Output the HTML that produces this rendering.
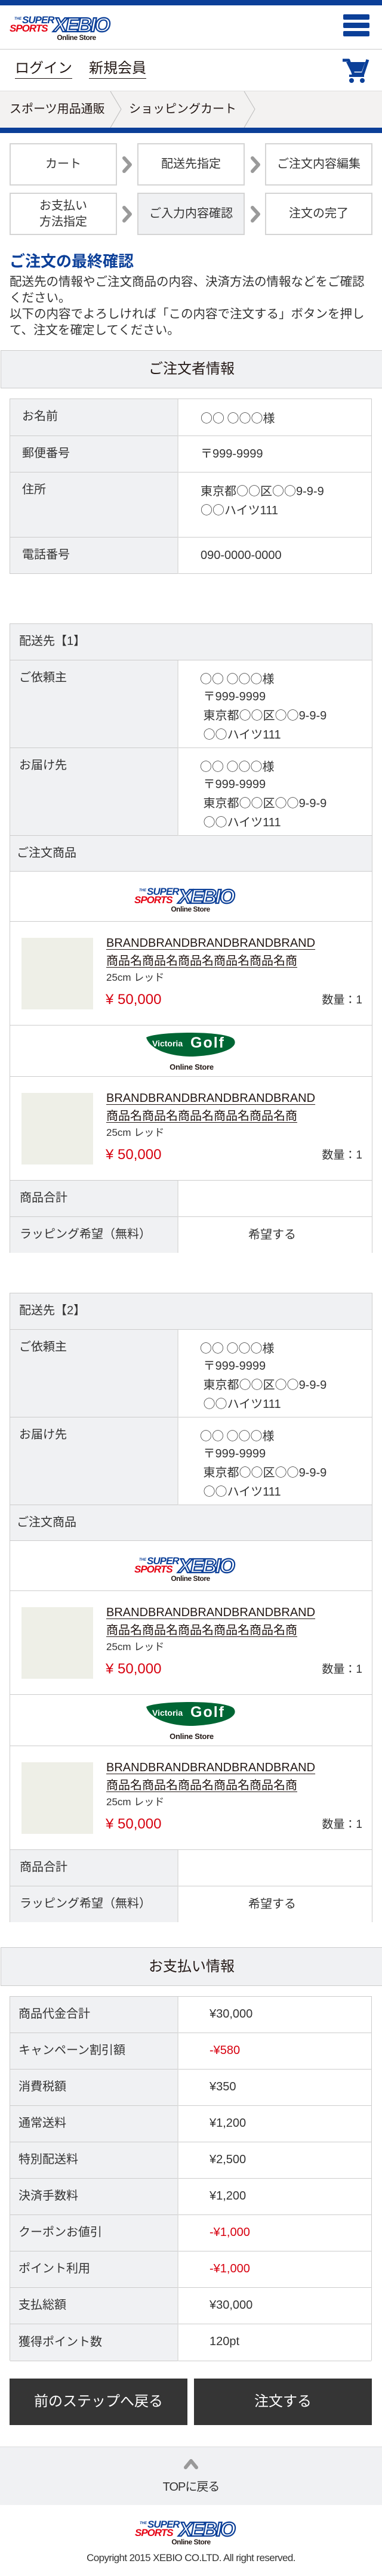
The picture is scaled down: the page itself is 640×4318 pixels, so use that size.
<!DOCTYPE html>
<html><head><meta charset="utf-8">
<style>
*{margin:0;padding:0;box-sizing:border-box}
body{width:640px;height:4318px;position:relative;background:#fff;font-family:"Liberation Sans","Noto Sans CJK JP",sans-serif;color:#333;overflow:hidden}
.a{position:absolute}
.g{background:#f0f1f3}
.c{font-family:"Noto Sans CJK JP",sans-serif}
.lbl{position:absolute;left:0;width:282px;background:#f0f1f3;border-right:2px solid #e2e2e2;border-bottom:1px solid #ccc}
.val{position:absolute;left:282px;right:0;background:#fff;border-bottom:1px solid #ccc}
.row{position:absolute;left:0;right:0}
.lt{position:absolute;left:20px;font-size:20px;line-height:29px}
.vt{position:absolute;left:37px;font-size:20px;line-height:29px;color:#333}
.step{position:absolute;width:180px;height:71px;border:2px solid #d4d4d4;display:flex;align-items:center;justify-content:center;text-align:center;font-size:20px;line-height:27px;color:#333}
.arr{position:absolute;width:22px;height:30px}
.u{text-decoration:underline;text-underline-offset:4px;text-decoration-thickness:1px;color:#231815}
.red{color:#d7000f}
</style></head><body>

<div class="a" style="left:0;top:0;width:640px;height:9px;background:#0b3f98"></div>
<svg class="a" style="left:16px;top:22px" width="190" height="46" viewBox="0 0 190 46">
 <text x="8" y="11" font-family="Liberation Sans" font-weight="bold" font-style="italic" font-size="6" fill="#0b3f98">THE</text>
 <text x="21" y="17" font-family="Liberation Sans" font-weight="bold" font-style="italic" font-size="17" fill="#0b3f98" letter-spacing="-1">SUPER</text>
 <text x="0" y="31" font-family="Liberation Sans" font-weight="bold" font-style="italic" font-size="17" fill="#e50012" letter-spacing="-1">SPORTS</text>
 <text x="74" y="31" font-family="Liberation Sans" font-weight="bold" font-style="italic" font-size="33" fill="#fff" stroke="#0b3f98" stroke-width="2.2" letter-spacing="-2">XEBIO</text>
 <text x="112" y="45" text-anchor="middle" font-family="Liberation Sans" font-weight="bold" font-size="12" fill="#231815" letter-spacing="-0.5">Online Store</text>
</svg>
<div class="a" style="left:575px;top:24px;width:44px;height:9px;background:#0b3f98;border-radius:2px"></div>
<div class="a" style="left:575px;top:38px;width:44px;height:9px;background:#0b3f98;border-radius:2px"></div>
<div class="a" style="left:575px;top:52px;width:44px;height:9px;background:#0b3f98;border-radius:2px"></div>
<div class="a" style="left:0;top:82px;width:640px;height:1px;background:#ccc"></div>

<div class="a" style="left:25px;top:100px;font-size:24px;line-height:30px;color:#231815;border-bottom:1px solid #231815;padding-bottom:1px">ログイン</div>
<div class="a" style="left:149px;top:100px;font-size:24px;line-height:30px;color:#231815;border-bottom:1px solid #231815;padding-bottom:1px">新規会員</div>
<svg class="a" style="left:572px;top:94px" width="48" height="46" viewBox="0 0 48 46">
 <path d="M2 7 L12 7 L20 30 L36 30 L44 6" fill="none" stroke="#0b3f98" stroke-width="5" stroke-linejoin="round"/>
 <path d="M8 10 L40 10 L34 26 L16 26 Z" fill="#0b3f98"/>
 <rect x="13" y="31" width="25" height="4" fill="#0b3f98"/>
 <circle cx="17" cy="41" r="4" fill="#0b3f98"/><circle cx="35" cy="41" r="4" fill="#0b3f98"/>
</svg>

<div class="a" style="left:0;top:152px;width:640px;height:62px;background:#f3f2f1;border-top:1px solid #ddd"></div>
<div class="a" style="left:16px;top:168px;font-size:20px;line-height:30px;color:#231815">スポーツ用品通販</div>
<div class="a" style="left:216px;top:168px;font-size:20px;line-height:30px;color:#231815">ショッピングカート</div>
<svg class="a" style="left:183px;top:153px" width="250" height="61" viewBox="0 0 250 61">
 <path d="M2 0 L20 30 L2 61" fill="none" stroke="#bbb" stroke-width="1"/>
 <path d="M226 0 L244 30 L226 61" fill="none" stroke="#bbb" stroke-width="1"/>
</svg>
<div class="a" style="left:0;top:214px;width:640px;height:9px;background:#0b3f98"></div>

<div class="step" style="left:16px;top:240px">カート</div>
<div class="step" style="left:230px;top:240px">配送先指定</div>
<div class="step" style="left:444px;top:240px">ご注文内容編集</div>
<div class="step" style="left:16px;top:323px">お支払い<br>方法指定</div>
<div class="step" style="left:230px;top:323px;background:#f0f1f3">ご入力内容確認</div>
<div class="step" style="left:444px;top:323px">注文の完了</div>
<svg class="arr" style="left:203px;top:261px" viewBox="0 0 22 30"><path d="M5 4 L15 15 L5 26" fill="none" stroke="#9a9a9a" stroke-width="6" stroke-linecap="round" stroke-linejoin="round"/></svg>
<svg class="arr" style="left:418px;top:261px" viewBox="0 0 22 30"><path d="M5 4 L15 15 L5 26" fill="none" stroke="#9a9a9a" stroke-width="6" stroke-linecap="round" stroke-linejoin="round"/></svg>
<svg class="arr" style="left:203px;top:344px" viewBox="0 0 22 30"><path d="M5 4 L15 15 L5 26" fill="none" stroke="#9a9a9a" stroke-width="6" stroke-linecap="round" stroke-linejoin="round"/></svg>
<svg class="arr" style="left:418px;top:344px" viewBox="0 0 22 30"><path d="M5 4 L15 15 L5 26" fill="none" stroke="#9a9a9a" stroke-width="6" stroke-linecap="round" stroke-linejoin="round"/></svg>

<div class="a" style="left:16px;top:421px;font-size:26px;line-height:34px;font-weight:bold;color:#0b3f98">ご注文の最終確認</div>
<div class="a" style="left:16px;top:459px;width:612px;font-size:20.5px;line-height:27px;color:#333">配送先の情報やご注文商品の内容、決済方法の情報などをご確認ください。<br>以下の内容でよろしければ「この内容で注文する」ボタンを押して、注文を確定してください。</div>

<div class="a g" style="left:1px;top:587px;width:660px;height:64px;border:1px solid #ccc;font-size:24px;line-height:62px;text-align:center;padding-right:20px;color:#231815">ご注文者情報</div>
<div class="a" style="left:16px;top:668px;width:607px;height:294px;border:1px solid #ccc;border-bottom:none">
 <div class="lbl" style="top:0;height:62px"><div class="lt" style="top:15px">お名前</div></div>
 <div class="val" style="top:0;height:62px"><div class="vt" style="top:16px"><span class="c">○○ ○○○</span>様</div></div>
 <div class="lbl" style="top:62px;height:61px"><div class="lt" style="top:15px">郵便番号</div></div>
 <div class="val" style="top:62px;height:61px"><div class="vt" style="top:16px">〒999-9999</div></div>
 <div class="lbl" style="top:123px;height:109px"><div class="lt" style="top:15px">住所</div></div>
 <div class="val" style="top:123px;height:109px"><div class="vt" style="top:15px">東京都<span class="c">○○</span>区<span class="c">○○</span>9-9-9<br><span class="c">○○</span>ハイツ111</div></div>
 <div class="lbl" style="top:232px;height:61px"><div class="lt" style="top:15px">電話番号</div></div>
 <div class="val" style="top:232px;height:61px"><div class="vt" style="top:16px">090-0000-0000</div></div>
</div>

<!-- SECTION 1 -->
<div class="a" style="left:16px;top:1045px;width:608px;height:1055px;border:1px solid #ccc">
 <div class="row g" style="top:0;height:61px;border-bottom:1px solid #ccc"><div class="lt" style="left:15px;top:15px">配送先【1】</div></div>
 <div class="lbl" style="top:61px;height:147px"><div class="lt" style="left:15px;top:15px">ご依頼主</div></div>
 <div class="val" style="top:61px;height:147px"><div class="vt" style="left:36px;top:15px"><span class="c">○○ ○○○</span>様<br>&nbsp;〒999-9999<br>&nbsp;東京都<span class="c">○○</span>区<span class="c">○○</span>9-9-9<br>&nbsp;<span class="c">○○</span>ハイツ111</div></div>
 <div class="lbl" style="top:208px;height:147px"><div class="lt" style="left:15px;top:15px">お届け先</div></div>
 <div class="val" style="top:208px;height:147px"><div class="vt" style="left:36px;top:15px"><span class="c">○○ ○○○</span>様<br>&nbsp;〒999-9999<br>&nbsp;東京都<span class="c">○○</span>区<span class="c">○○</span>9-9-9<br>&nbsp;<span class="c">○○</span>ハイツ111</div></div>
 <div class="row g" style="top:355px;height:60px;border-bottom:1px solid #ccc"><div class="lt" style="left:11px;top:15px">ご注文商品</div></div>
 <div class="row" style="top:415px;height:84px;border-bottom:1px solid #ccc">
  <svg class="a" style="left:208px;top:22px" width="190" height="46" viewBox="0 0 190 46">
   <text x="8" y="11" font-family="Liberation Sans" font-weight="bold" font-style="italic" font-size="6" fill="#0b3f98">THE</text>
   <text x="21" y="17" font-family="Liberation Sans" font-weight="bold" font-style="italic" font-size="17" fill="#0b3f98" letter-spacing="-1">SUPER</text>
   <text x="0" y="31" font-family="Liberation Sans" font-weight="bold" font-style="italic" font-size="17" fill="#e50012" letter-spacing="-1">SPORTS</text>
   <text x="74" y="31" font-family="Liberation Sans" font-weight="bold" font-style="italic" font-size="33" fill="#fff" stroke="#0b3f98" stroke-width="2.2" letter-spacing="-2">XEBIO</text>
   <text x="94" y="45" text-anchor="middle" font-family="Liberation Sans" font-weight="bold" font-size="12" fill="#231815" letter-spacing="-0.5">Online Store</text>
  </svg>
 </div>
 <div class="row" style="top:499px;height:174px;border-bottom:1px solid #ccc">
  <div class="a" style="left:19px;top:27px;width:120px;height:120px;background:#eeefe7"></div>
  <div class="a u" style="left:161px;top:22px;font-size:20px;line-height:29px">BRANDBRANDBRANDBRANDBRAND</div>
  <div class="a u" style="left:161px;top:52px;font-size:20px;line-height:29px">商品名商品名商品名商品名商品名商</div>
  <div class="a" style="left:161px;top:82px;font-size:17px;line-height:24px">25cm レッド</div>
  <div class="a red" style="left:160px;top:116px;font-size:24px;line-height:30px">¥ 50,000</div>
  <div class="a" style="right:16px;top:119px;font-size:19px;line-height:26px">数量：1</div>
 </div>
 <div class="row" style="top:673px;height:86px;border-bottom:1px solid #ccc">
  <svg class="a" style="left:226px;top:10px" width="156" height="72" viewBox="0 0 156 72">
   <path d="M2 10 C20 0 130 -2 148 12 C160 26 130 40 80 42 C40 42 8 30 2 10 Z" fill="#006634"/>
   <text x="12" y="25" font-family="Liberation Sans" font-weight="bold" font-size="14" fill="#fff">Victoria</text>
   <text x="76" y="27" font-family="Liberation Sans" font-weight="bold" font-size="25" fill="#fff" letter-spacing="2">Golf</text>
   <text x="78" y="64" text-anchor="middle" font-family="Liberation Sans" font-weight="bold" font-size="13" fill="#231815" letter-spacing="-0.3">Online Store</text>
  </svg>
 </div>
 <div class="row" style="top:759px;height:174px;border-bottom:1px solid #ccc">
  <div class="a" style="left:19px;top:27px;width:120px;height:120px;background:#eeefe7"></div>
  <div class="a u" style="left:161px;top:22px;font-size:20px;line-height:29px">BRANDBRANDBRANDBRANDBRAND</div>
  <div class="a u" style="left:161px;top:52px;font-size:20px;line-height:29px">商品名商品名商品名商品名商品名商</div>
  <div class="a" style="left:161px;top:82px;font-size:17px;line-height:24px">25cm レッド</div>
  <div class="a red" style="left:160px;top:116px;font-size:24px;line-height:30px">¥ 50,000</div>
  <div class="a" style="right:16px;top:119px;font-size:19px;line-height:26px">数量：1</div>
 </div>
 <div class="lbl" style="top:933px;height:61px"><div class="lt" style="left:16px;top:15px">商品合計</div></div>
 <div class="val" style="top:933px;height:61px"></div>
 <div class="lbl" style="top:994px;height:60px;border-bottom:none"><div class="lt" style="left:16px;top:15px">ラッピング希望（無料）</div></div>
 <div class="val" style="top:994px;height:60px;border-bottom:none;text-align:center"><div style="font-size:20px;line-height:60px;padding-right:10px">希望する</div></div>
</div>

<!-- SECTION 2 -->
<div class="a" style="left:16px;top:2167px;width:608px;height:1055px;border:1px solid #ccc">
 <div class="row g" style="top:0;height:61px;border-bottom:1px solid #ccc"><div class="lt" style="left:15px;top:15px">配送先【2】</div></div>
 <div class="lbl" style="top:61px;height:147px"><div class="lt" style="left:15px;top:15px">ご依頼主</div></div>
 <div class="val" style="top:61px;height:147px"><div class="vt" style="left:36px;top:15px"><span class="c">○○ ○○○</span>様<br>&nbsp;〒999-9999<br>&nbsp;東京都<span class="c">○○</span>区<span class="c">○○</span>9-9-9<br>&nbsp;<span class="c">○○</span>ハイツ111</div></div>
 <div class="lbl" style="top:208px;height:147px"><div class="lt" style="left:15px;top:15px">お届け先</div></div>
 <div class="val" style="top:208px;height:147px"><div class="vt" style="left:36px;top:15px"><span class="c">○○ ○○○</span>様<br>&nbsp;〒999-9999<br>&nbsp;東京都<span class="c">○○</span>区<span class="c">○○</span>9-9-9<br>&nbsp;<span class="c">○○</span>ハイツ111</div></div>
 <div class="row g" style="top:355px;height:60px;border-bottom:1px solid #ccc"><div class="lt" style="left:11px;top:15px">ご注文商品</div></div>
 <div class="row" style="top:415px;height:84px;border-bottom:1px solid #ccc">
  <svg class="a" style="left:208px;top:22px" width="190" height="46" viewBox="0 0 190 46">
   <text x="8" y="11" font-family="Liberation Sans" font-weight="bold" font-style="italic" font-size="6" fill="#0b3f98">THE</text>
   <text x="21" y="17" font-family="Liberation Sans" font-weight="bold" font-style="italic" font-size="17" fill="#0b3f98" letter-spacing="-1">SUPER</text>
   <text x="0" y="31" font-family="Liberation Sans" font-weight="bold" font-style="italic" font-size="17" fill="#e50012" letter-spacing="-1">SPORTS</text>
   <text x="74" y="31" font-family="Liberation Sans" font-weight="bold" font-style="italic" font-size="33" fill="#fff" stroke="#0b3f98" stroke-width="2.2" letter-spacing="-2">XEBIO</text>
   <text x="94" y="45" text-anchor="middle" font-family="Liberation Sans" font-weight="bold" font-size="12" fill="#231815" letter-spacing="-0.5">Online Store</text>
  </svg>
 </div>
 <div class="row" style="top:499px;height:174px;border-bottom:1px solid #ccc">
  <div class="a" style="left:19px;top:27px;width:120px;height:120px;background:#eeefe7"></div>
  <div class="a u" style="left:161px;top:22px;font-size:20px;line-height:29px">BRANDBRANDBRANDBRANDBRAND</div>
  <div class="a u" style="left:161px;top:52px;font-size:20px;line-height:29px">商品名商品名商品名商品名商品名商</div>
  <div class="a" style="left:161px;top:82px;font-size:17px;line-height:24px">25cm レッド</div>
  <div class="a red" style="left:160px;top:116px;font-size:24px;line-height:30px">¥ 50,000</div>
  <div class="a" style="right:16px;top:119px;font-size:19px;line-height:26px">数量：1</div>
 </div>
 <div class="row" style="top:673px;height:86px;border-bottom:1px solid #ccc">
  <svg class="a" style="left:226px;top:10px" width="156" height="72" viewBox="0 0 156 72">
   <path d="M2 10 C20 0 130 -2 148 12 C160 26 130 40 80 42 C40 42 8 30 2 10 Z" fill="#006634"/>
   <text x="12" y="25" font-family="Liberation Sans" font-weight="bold" font-size="14" fill="#fff">Victoria</text>
   <text x="76" y="27" font-family="Liberation Sans" font-weight="bold" font-size="25" fill="#fff" letter-spacing="2">Golf</text>
   <text x="78" y="64" text-anchor="middle" font-family="Liberation Sans" font-weight="bold" font-size="13" fill="#231815" letter-spacing="-0.3">Online Store</text>
  </svg>
 </div>
 <div class="row" style="top:759px;height:174px;border-bottom:1px solid #ccc">
  <div class="a" style="left:19px;top:27px;width:120px;height:120px;background:#eeefe7"></div>
  <div class="a u" style="left:161px;top:22px;font-size:20px;line-height:29px">BRANDBRANDBRANDBRANDBRAND</div>
  <div class="a u" style="left:161px;top:52px;font-size:20px;line-height:29px">商品名商品名商品名商品名商品名商</div>
  <div class="a" style="left:161px;top:82px;font-size:17px;line-height:24px">25cm レッド</div>
  <div class="a red" style="left:160px;top:116px;font-size:24px;line-height:30px">¥ 50,000</div>
  <div class="a" style="right:16px;top:119px;font-size:19px;line-height:26px">数量：1</div>
 </div>
 <div class="lbl" style="top:933px;height:61px"><div class="lt" style="left:16px;top:15px">商品合計</div></div>
 <div class="val" style="top:933px;height:61px"></div>
 <div class="lbl" style="top:994px;height:60px;border-bottom:none"><div class="lt" style="left:16px;top:15px">ラッピング希望（無料）</div></div>
 <div class="val" style="top:994px;height:60px;border-bottom:none;text-align:center"><div style="font-size:20px;line-height:60px;padding-right:10px">希望する</div></div>
</div>

<div class="a g" style="left:1px;top:3264px;width:660px;height:65px;border:1px solid #ccc;font-size:24px;line-height:63px;text-align:center;padding-right:20px;color:#231815">お支払い情報</div>
<div class="a" style="left:16px;top:3346px;width:607px;height:611px;border:1px solid #ccc;border-bottom:none">
 <div class="lbl" style="top:0;height:61px"><div class="lt" style="left:14px;top:15px">商品代金合計</div></div>
 <div class="val" style="top:0;height:61px"><div class="vt" style="left:52px;top:15px">¥30,000</div></div>
 <div class="lbl" style="top:61px;height:61px"><div class="lt" style="left:14px;top:15px">キャンペーン割引額</div></div>
 <div class="val" style="top:61px;height:61px"><div class="vt red" style="left:52px;top:15px">-¥580</div></div>
 <div class="lbl" style="top:122px;height:61px"><div class="lt" style="left:14px;top:15px">消費税額</div></div>
 <div class="val" style="top:122px;height:61px"><div class="vt" style="left:52px;top:15px">¥350</div></div>
 <div class="lbl" style="top:183px;height:61px"><div class="lt" style="left:14px;top:15px">通常送料</div></div>
 <div class="val" style="top:183px;height:61px"><div class="vt" style="left:52px;top:15px">¥1,200</div></div>
 <div class="lbl" style="top:244px;height:61px"><div class="lt" style="left:14px;top:15px">特別配送料</div></div>
 <div class="val" style="top:244px;height:61px"><div class="vt" style="left:52px;top:15px">¥2,500</div></div>
 <div class="lbl" style="top:305px;height:61px"><div class="lt" style="left:14px;top:15px">決済手数料</div></div>
 <div class="val" style="top:305px;height:61px"><div class="vt" style="left:52px;top:15px">¥1,200</div></div>
 <div class="lbl" style="top:366px;height:61px"><div class="lt" style="left:14px;top:15px">クーポンお値引</div></div>
 <div class="val" style="top:366px;height:61px"><div class="vt red" style="left:52px;top:15px">-¥1,000</div></div>
 <div class="lbl" style="top:427px;height:61px"><div class="lt" style="left:14px;top:15px">ポイント利用</div></div>
 <div class="val" style="top:427px;height:61px"><div class="vt red" style="left:52px;top:15px">-¥1,000</div></div>
 <div class="lbl" style="top:488px;height:61px"><div class="lt" style="left:14px;top:15px">支払総額</div></div>
 <div class="val" style="top:488px;height:61px"><div class="vt" style="left:52px;top:15px">¥30,000</div></div>
 <div class="lbl" style="top:549px;height:62px"><div class="lt" style="left:14px;top:16px">獲得ポイント数</div></div>
 <div class="val" style="top:549px;height:62px"><div class="vt" style="left:52px;top:15px">120pt</div></div>
</div>

<div class="a" style="left:16px;top:3987px;width:298px;height:78px;background:#353535;color:#fff;font-size:24px;line-height:78px;text-align:center">前のステップへ戻る</div>
<div class="a" style="left:325px;top:3987px;width:298px;height:78px;background:#353535;color:#fff;font-size:24px;line-height:78px;text-align:center">注文する</div>

<div class="a" style="left:0;top:4101px;width:640px;height:98px;background:#f0f1f3;border-top:1px solid #ddd"></div>
<svg class="a" style="left:306px;top:4118px" width="28" height="24" viewBox="0 0 28 24"><path d="M5 18 L14 7 L23 18" fill="none" stroke="#999" stroke-width="6" stroke-linecap="round" stroke-linejoin="round"/></svg>
<div class="a" style="left:0;top:4155px;width:640px;text-align:center;font-size:20px;line-height:28px;color:#333;letter-spacing:-1px">TOPに戻る</div>
<svg class="a" style="left:226px;top:4220px" width="190" height="46" viewBox="0 0 190 46">
 <text x="8" y="11" font-family="Liberation Sans" font-weight="bold" font-style="italic" font-size="6" fill="#0b3f98">THE</text>
 <text x="21" y="17" font-family="Liberation Sans" font-weight="bold" font-style="italic" font-size="17" fill="#0b3f98" letter-spacing="-1">SUPER</text>
 <text x="0" y="31" font-family="Liberation Sans" font-weight="bold" font-style="italic" font-size="17" fill="#e50012" letter-spacing="-1">SPORTS</text>
 <text x="74" y="31" font-family="Liberation Sans" font-weight="bold" font-style="italic" font-size="33" fill="#fff" stroke="#0b3f98" stroke-width="2.2" letter-spacing="-2">XEBIO</text>
 <text x="94" y="45" text-anchor="middle" font-family="Liberation Sans" font-weight="bold" font-size="12" fill="#231815" letter-spacing="-0.5">Online Store</text>
</svg>
<div class="a" style="left:0;top:4276px;width:640px;text-align:center;font-size:17px;line-height:24px;color:#333;letter-spacing:-0.6px">Copyright 2015 XEBIO CO.LTD. All right reserved.</div>
</body></html>
